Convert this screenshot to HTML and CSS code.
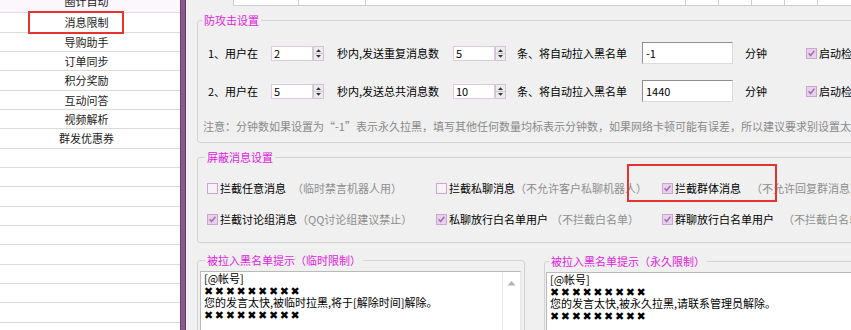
FILE: index.html
```html
<!DOCTYPE html>
<html lang="zh-CN">
<head>
<meta charset="utf-8">
<title>消息限制</title>
<link rel="stylesheet" href="styles.css">
</head>
<body>
<div class="app">
  <aside class="menu">
    <div class="menu-list">
      <div class="item first">圈计自动</div>
      <div class="item">消息限制</div>
      <div class="item">导购助手</div>
      <div class="item">订单同步</div>
      <div class="item">积分奖励</div>
      <div class="item">互动问答</div>
      <div class="item">视频解析</div>
      <div class="item">群发优惠券</div>
      <div class="item"></div>
      <div class="item"></div>
      <div class="item"></div>
      <div class="item"></div>
      <div class="item"></div>
      <div class="item"></div>
      <div class="item"></div>
      <div class="item"></div>
      <div class="item"></div>
      <div class="item"></div>
    </div>
    <div class="mark mark-menu"></div>
  </aside>
  <div class="splitter"></div>
  <main class="content">
    <div class="tabs">
      <span class="tab t1"></span><span class="tab t2"></span><span class="tab t3"></span><span class="tab t4"></span><span class="tab t4"></span><span class="tab t4"></span><span class="tab t4"></span><span class="tab t4"></span>
    </div>

    <fieldset class="group g1">
      <legend class="lg1">防攻击设置</legend>
      <div class="arow r1">
        <span class="l1">1、用户在</span>
        <span class="spin"><span class="spin-val">2</span><span class="spin-btn"><svg width="11" height="15" viewBox="0 0 11 15"><rect x="0.5" y="0.5" width="10" height="14" fill="#ececec" stroke="#d5c2d8"/><line x1="1" y1="7.5" x2="10" y2="7.5" stroke="#d5c2d8"/><path d="M3 6h5L5.5 3.2z" fill="#333"/><path d="M3 9h5L5.5 11.8z" fill="#333"/></svg></span></span>
        <span class="l2">秒内,发送重复消息数</span>
        <span class="spin"><span class="spin-val">5</span><span class="spin-btn"><svg width="11" height="15" viewBox="0 0 11 15"><rect x="0.5" y="0.5" width="10" height="14" fill="#ececec" stroke="#d5c2d8"/><line x1="1" y1="7.5" x2="10" y2="7.5" stroke="#d5c2d8"/><path d="M3 6h5L5.5 3.2z" fill="#333"/><path d="M3 9h5L5.5 11.8z" fill="#333"/></svg></span></span>
        <span class="l3">条、将自动拉入黑名单</span>
        <span class="box">-1</span>
        <span class="l4">分钟</span>
        <span class="cb on"><svg width="9" height="9" viewBox="0 0 9 9"><path d="M1.6 4.2l2 2.3 3.8-4.8" stroke="#a86cb6" stroke-width="1.5" fill="none"/></svg></span><span>启动检测</span>
      </div>
      <div class="arow r2">
        <span class="l1">2、用户在</span>
        <span class="spin"><span class="spin-val">5</span><span class="spin-btn"><svg width="11" height="15" viewBox="0 0 11 15"><rect x="0.5" y="0.5" width="10" height="14" fill="#ececec" stroke="#d5c2d8"/><line x1="1" y1="7.5" x2="10" y2="7.5" stroke="#d5c2d8"/><path d="M3 6h5L5.5 3.2z" fill="#333"/><path d="M3 9h5L5.5 11.8z" fill="#333"/></svg></span></span>
        <span class="l2">秒内,发送总共消息数</span>
        <span class="spin"><span class="spin-val">10</span><span class="spin-btn"><svg width="11" height="15" viewBox="0 0 11 15"><rect x="0.5" y="0.5" width="10" height="14" fill="#ececec" stroke="#d5c2d8"/><line x1="1" y1="7.5" x2="10" y2="7.5" stroke="#d5c2d8"/><path d="M3 6h5L5.5 3.2z" fill="#333"/><path d="M3 9h5L5.5 11.8z" fill="#333"/></svg></span></span>
        <span class="l3">条、将自动拉入黑名单</span>
        <span class="box">1440</span>
        <span class="l4">分钟</span>
        <span class="cb on"><svg width="9" height="9" viewBox="0 0 9 9"><path d="M1.6 4.2l2 2.3 3.8-4.8" stroke="#a86cb6" stroke-width="1.5" fill="none"/></svg></span><span>启动检测</span>
      </div>
      <div class="note">注意：分钟数如果设置为“-1”表示永久拉黑，填写其他任何数量均标表示分钟数，如果网络卡顿可能有误差，所以建议要求别设置太短</div>
    </fieldset>

    <fieldset class="group g2">
      <legend class="lg2">屏蔽消息设置</legend>
      <div class="crow ra">
        <div class="col col1"><span class="cb"></span><span>拦截任意消息</span><span class="hint m6">（临时禁言机器人用）</span></div>
        <div class="col col2"><span class="cb"></span><span>拦截私聊消息</span><span class="hint">（不允许客户私聊机器人）</span></div>
        <div class="col col3"><span class="cb on"><svg width="9" height="9" viewBox="0 0 9 9"><path d="M1.6 4.2l2 2.3 3.8-4.8" stroke="#a86cb6" stroke-width="1.5" fill="none"/></svg></span><span>拦截群体消息</span><span class="hint m10">（不允许回复群消息）</span></div>
      </div>
      <div class="crow rb">
        <div class="col col1"><span class="cb on"><svg width="9" height="9" viewBox="0 0 9 9"><path d="M1.6 4.2l2 2.3 3.8-4.8" stroke="#a86cb6" stroke-width="1.5" fill="none"/></svg></span><span>拦截讨论组消息</span><span class="hint">（QQ讨论组建议禁止）</span></div>
        <div class="col col2"><span class="cb on"><svg width="9" height="9" viewBox="0 0 9 9"><path d="M1.6 4.2l2 2.3 3.8-4.8" stroke="#a86cb6" stroke-width="1.5" fill="none"/></svg></span><span>私聊放行白名单用户</span><span class="hint m3">（不拦截白名单）</span></div>
        <div class="col col3"><span class="cb on"><svg width="9" height="9" viewBox="0 0 9 9"><path d="M1.6 4.2l2 2.3 3.8-4.8" stroke="#a86cb6" stroke-width="1.5" fill="none"/></svg></span><span>群聊放行白名单用户</span><span class="hint m9">（不拦截白名单）</span></div>
      </div>
    </fieldset>

    <div class="bottom">
      <fieldset class="group g3l">
        <legend class="lg2">被拉入黑名单提示（临时限制）</legend>
        <div class="tb">
          <div class="tb-text">[@帐号]<br><span class="xs">✖✖✖✖✖✖✖✖✖</span><br>您的发言太快,被临时拉黑,将于[解除时间]解除。<br><span class="xs">✖✖✖✖✖✖✖✖✖</span></div>
          <div class="tb-scroll"><svg width="9" height="6" viewBox="0 0 9 6"><path d="M0.5 5.5h8L4.5 1z" fill="#b4b4b4"/></svg></div>
        </div>
      </fieldset>
      <fieldset class="group g3r">
        <legend class="lg3">被拉入黑名单提示（永久限制）</legend>
        <div class="tb tbr">
          <div class="tb-text">[@帐号]<br><span class="xs">✖✖✖✖✖✖✖✖✖</span><br>您的发言太快,被永久拉黑,请联系管理员解除。<br><span class="xs">✖✖✖✖✖✖✖✖✖</span></div>
        </div>
      </fieldset>
    </div>

    <div class="mark mark-group"></div>
  </main>
</div>
</body>
</html>
```

FILE: styles.css
```css
html, body {
  margin: 0;
  padding: 0;
}
body {
  width: 851px;
  height: 330px;
  overflow: hidden;
  background: #f0f0f0;
  color: #000;
  font-family: "Noto Sans CJK SC", "DejaVu Sans", sans-serif;
  font-size: 11px;
}
.app {
  display: flex;
  height: 330px;
}

/* ---------- left menu ---------- */
.menu {
  position: relative;
  width: 180px;
  flex: none;
  background: #fff;
  overflow: hidden;
}
.menu-list {
  margin-top: -8px;
}
.item {
  height: 19.33px;
  box-sizing: border-box;
  border-bottom: 1px solid #dcdcd6;
  text-align: center;
  padding-right: 7px;
  line-height: 18px;
  color: #1a1a1a;
}
.item.first {
  height: 21.33px;
  background: #fcf7fc;
  border-bottom-color: #ead6ea;
}
.splitter {
  width: 6px;
  flex: none;
  box-sizing: border-box;
  background: #8a5a8e;
  border-left: 1px solid #6c406e;
  border-right: 1px solid #5e3660;
}

/* ---------- content ---------- */
.content {
  position: relative;
  flex: 1;
  min-width: 0;
  overflow: hidden;
  padding-left: 11px;
  white-space: nowrap;
}
.tabs {
  display: flex;
  margin-left: 36px;
  height: 5px;
  background: #fff;
  border-bottom: 1px solid #cdcdcd;
}
.tab {
  border-left: 1px solid #d6c8da;
  height: 5px;
  flex: none;
}
.t1 { width: 64px; }
.t2 { width: 66px; }
.t3 { width: 319px; }
.t4 { width: 32px; }

.group {
  margin: 0;
  padding: 0;
  border: 1px solid #d3d3d3;
  border-radius: 3px;
  min-width: 0;
  box-sizing: border-box;
}
.group legend {
  font-size: 11px;
  line-height: 14px;
  color: #e020e0;
  padding: 0 2px;
}
.lg1 { margin-left: 4px; }
.lg2 { margin-left: 7px; }
.lg3 { margin-left: 4px; }

.g1 {
  margin-top: 7px;
  width: 700px;
  padding-bottom: 9px;
}
.arow {
  display: flex;
  align-items: center;
  height: 22px;
  padding-left: 10px;
}
.arow > * { flex: none; }
.r1 { margin-top: 15px; }
.r2 { margin-top: 16px; }
.l1 { width: 63px; }
.l2 { width: 116px; margin-left: 13px; }
.l3 { width: 125px; margin-left: 11px; }
.l4 { width: 61px; margin-left: 12px; }
.spin {
  display: flex;
  width: 53px;
  height: 15px;
}
.spin-val {
  width: 42px;
  height: 15px;
  box-sizing: border-box;
  background: #fff;
  border: 1px solid #dccbdf;
  padding-left: 2px;
  line-height: 13px;
}
.spin-btn {
  width: 11px;
  height: 15px;
  display: flex;
}
.box {
  width: 91px;
  height: 22px;
  box-sizing: border-box;
  background: #fff;
  border: 1px solid #dadada;
  border-top-color: #8f8f8f;
  border-left-color: #8f8f8f;
  padding-left: 3px;
  line-height: 20px;
}
.cb {
  width: 11px;
  height: 11px;
  flex: none;
  box-sizing: border-box;
  border: 1px solid #c9a6cd;
  background: #f8f1f9;
  margin-right: 2px;
  display: flex;
  align-items: center;
  justify-content: center;
}
.cb.on {
  background: #e6d2ea;
}
.note {
  margin-top: 17px;
  padding-left: 5px;
  line-height: 14px;
  color: #8a8a8a;
}

.g2 {
  margin-top: 7px;
  width: 700px;
  padding-bottom: 15px;
}
.crow {
  display: flex;
  align-items: center;
  height: 16px;
  padding-left: 9px;
}
.ra { margin-top: 16px; }
.rb { margin-top: 15px; }
.col {
  display: flex;
  align-items: center;
  flex: none;
}
.col1 { width: 229px; }
.col2 { width: 226px; }
.hint { color: #8e8e8e; }
.m3 { margin-left: 3px; }
.m6 { margin-left: 6px; }
.m9 { margin-left: 9px; }
.m10 { margin-left: 10px; }

.bottom {
  display: flex;
  align-items: flex-start;
  margin-top: 10px;
}
.g3l {
  flex: none;
  width: 328px;
}
.g3r {
  flex: none;
  width: 400px;
  margin-left: 19px;
  margin-top: 1px;
}
.tb {
  display: flex;
  height: 80px;
  margin: 4px 3px 0 2px;
  background: #fff;
  border: 1px solid #b9b9b9;
  border-right-color: #e6e6e6;
}
.tbr {
  margin: 4px 0 0 1px;
}
.tb-text {
  flex: 1;
  padding-left: 3px;
  line-height: 12px;
  color: #000;
}
.xs {
  letter-spacing: 1.6px;
}
.tb-scroll {
  width: 18px;
  border-left: 1px solid #e8e8e8;
  display: flex;
  justify-content: center;
  padding-top: 8px;
  box-sizing: border-box;
}
.tb-scroll svg {
  display: block;
}

/* annotation boxes */
.mark {
  position: absolute;
  border: 2px solid #e8322f;
  box-sizing: border-box;
}
.mark-menu {
  left: 28px;
  top: 11px;
  width: 96px;
  height: 23px;
}
.mark-group {
  left: 441px;
  top: 164px;
  width: 150px;
  height: 38px;
}
```
